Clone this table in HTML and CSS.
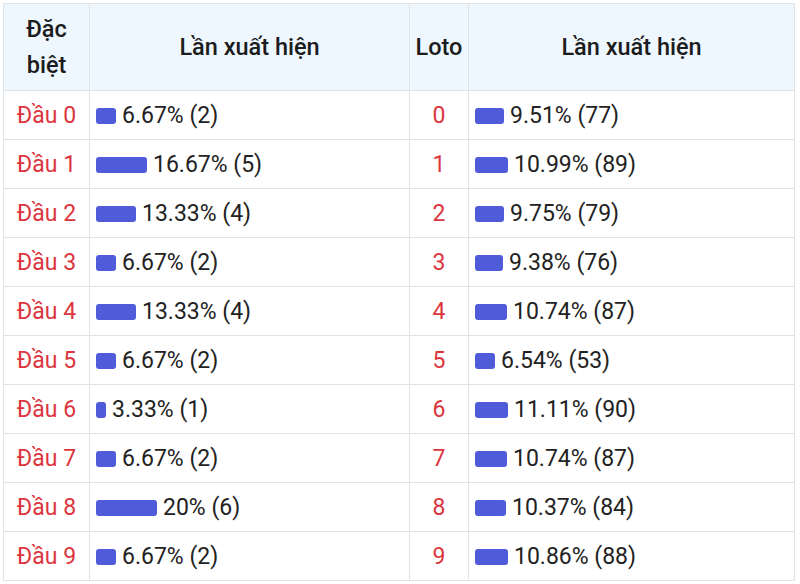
FILE: index.html
```html
<!DOCTYPE html>
<html lang="vi">
<head>
<meta charset="utf-8">
<link rel="stylesheet" href="styles.css">
</head>
<body>
<table class="stats">
  <colgroup>
    <col class="c1"><col class="c2"><col class="c3"><col class="c4">
  </colgroup>
  <thead>
    <tr>
      <th>Đặc<br>biệt</th>
      <th>Lần xuất hiện</th>
      <th>Loto</th>
      <th>Lần xuất hiện</th>
    </tr>
  </thead>
  <tbody>
    <tr><td class="head">Đầu 0</td><td><span class="bar" style="width:20px"></span>6.67% (2)</td><td class="head">0</td><td><span class="bar" style="width:29px"></span>9.51% (77)</td></tr>
    <tr><td class="head">Đầu 1</td><td><span class="bar" style="width:51px"></span>16.67% (5)</td><td class="head">1</td><td><span class="bar" style="width:33px"></span>10.99% (89)</td></tr>
    <tr><td class="head">Đầu 2</td><td><span class="bar" style="width:40px"></span>13.33% (4)</td><td class="head">2</td><td><span class="bar" style="width:29px"></span>9.75% (79)</td></tr>
    <tr><td class="head">Đầu 3</td><td><span class="bar" style="width:20px"></span>6.67% (2)</td><td class="head">3</td><td><span class="bar" style="width:28px"></span>9.38% (76)</td></tr>
    <tr><td class="head">Đầu 4</td><td><span class="bar" style="width:40px"></span>13.33% (4)</td><td class="head">4</td><td><span class="bar" style="width:32px"></span>10.74% (87)</td></tr>
    <tr><td class="head">Đầu 5</td><td><span class="bar" style="width:20px"></span>6.67% (2)</td><td class="head">5</td><td><span class="bar" style="width:20px"></span>6.54% (53)</td></tr>
    <tr><td class="head">Đầu 6</td><td><span class="bar" style="width:10px"></span>3.33% (1)</td><td class="head">6</td><td><span class="bar" style="width:33px"></span>11.11% (90)</td></tr>
    <tr><td class="head">Đầu 7</td><td><span class="bar" style="width:20px"></span>6.67% (2)</td><td class="head">7</td><td><span class="bar" style="width:32px"></span>10.74% (87)</td></tr>
    <tr><td class="head">Đầu 8</td><td><span class="bar" style="width:61px"></span>20% (6)</td><td class="head">8</td><td><span class="bar" style="width:31px"></span>10.37% (84)</td></tr>
    <tr><td class="head">Đầu 9</td><td><span class="bar" style="width:20px"></span>6.67% (2)</td><td class="head">9</td><td><span class="bar" style="width:33px"></span>10.86% (88)</td></tr>
  </tbody>
</table>
</body>
</html>
```

FILE: styles.css
```css
html, body {
  margin: 0;
  background: #ffffff;
}
body {
  padding: 3px 0 0 3px;
  font-family: Roboto, "Liberation Sans", sans-serif;
  color: #222222;
}
.stats {
  border-collapse: collapse;
  table-layout: fixed;
  width: 791px;
  font-size: 23px;
}
.c1 { width: 86px; }
.c2 { width: 320px; }
.c3 { width: 59px; }
.c4 { width: 326px; }
.stats th,
.stats td {
  border: 1px solid #e0e3e6;
}
.stats th {
  background: #eef6fe;
  font-weight: 500;
  font-size: 23.5px;
  line-height: 36px;
  text-align: center;
  padding: 7px 2px 7px 2px;
  height: 72px;
  color: #1c1c1c;
}
.stats td {
  height: 34px;
  line-height: 34px;
  padding: 8px 6px 6px 6px;
  white-space: nowrap;
}
.stats td.head {
  text-align: center;
  color: #dc353e;
  padding-left: 2px;
  padding-right: 2px;
}
.bar {
  display: inline-block;
  height: 16px;
  background: #4f5bd8;
  border-radius: 3px;
  vertical-align: -1px;
  margin-right: 6px;
}
```
